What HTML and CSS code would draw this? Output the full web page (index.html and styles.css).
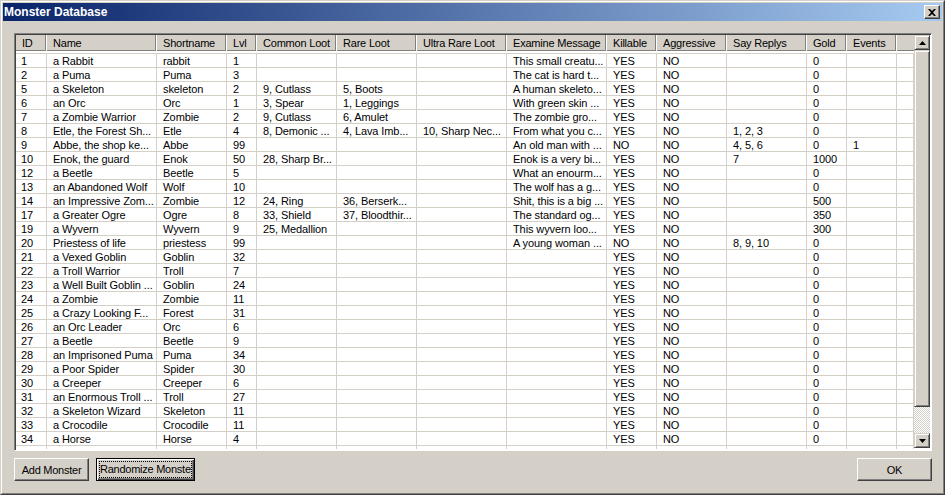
FILE: index.html
```html
<!DOCTYPE html>
<html lang="en">
<head>
<meta charset="utf-8">
<title>Monster Database</title>
<link rel="stylesheet" href="styles.css">
</head>
<body>
<div class="window">
<div class="window-inner">
  <div class="titlebar">
    <span class="title">Monster Database</span>
    <button class="close" type="button" aria-label="Close"><svg width="8" height="7" viewBox="0 0 8 7"><path d="M0 0h2l2 2 2-2h2L5 3.500 8 7H6L4 5 2 7H0l3-3.500z" fill="#000"/></svg></button>
  </div>
  <div class="content">
    <div class="listview">
      <div class="list-scroll">
        <table class="grid">
          <colgroup>
            <col class="c-id"><col class="c-name"><col class="c-short"><col class="c-lvl"><col class="c-loot"><col class="c-loot"><col class="c-ultra"><col class="c-exam"><col class="c-kill"><col class="c-aggr"><col class="c-say"><col class="c-gold"><col class="c-ev"><col class="c-fill">
          </colgroup>
          <thead>
            <tr><th><div>ID</div></th><th><div>Name</div></th><th><div>Shortname</div></th><th><div>Lvl</div></th><th><div>Common Loot</div></th><th><div>Rare Loot</div></th><th><div>Ultra Rare Loot</div></th><th><div>Examine Message</div></th><th><div>Killable</div></th><th><div>Aggressive</div></th><th><div>Say Replys</div></th><th><div>Gold</div></th><th><div>Events</div></th><th><div></div></th></tr>
          </thead>
          <tbody>
            <tr><td>1</td><td>a Rabbit</td><td>rabbit</td><td>1</td><td></td><td></td><td></td><td>This small creatu...</td><td>YES</td><td>NO</td><td></td><td>0</td><td></td><td></td></tr>
            <tr><td>2</td><td>a Puma</td><td>Puma</td><td>3</td><td></td><td></td><td></td><td>The cat is hard t...</td><td>YES</td><td>NO</td><td></td><td>0</td><td></td><td></td></tr>
            <tr><td>5</td><td>a Skeleton</td><td>skeleton</td><td>2</td><td>9, Cutlass</td><td>5, Boots</td><td></td><td>A human skeleto...</td><td>YES</td><td>NO</td><td></td><td>0</td><td></td><td></td></tr>
            <tr><td>6</td><td>an Orc</td><td>Orc</td><td>1</td><td>3, Spear</td><td>1, Leggings</td><td></td><td>With green skin ...</td><td>YES</td><td>NO</td><td></td><td>0</td><td></td><td></td></tr>
            <tr><td>7</td><td>a Zombie Warrior</td><td>Zombie</td><td>2</td><td>9, Cutlass</td><td>6, Amulet</td><td></td><td>The zombie gro...</td><td>YES</td><td>NO</td><td></td><td>0</td><td></td><td></td></tr>
            <tr><td>8</td><td>Etle, the Forest Sh...</td><td>Etle</td><td>4</td><td>8, Demonic ...</td><td>4, Lava Imb...</td><td>10, Sharp Nec...</td><td>From what you c...</td><td>YES</td><td>NO</td><td>1, 2, 3</td><td>0</td><td></td><td></td></tr>
            <tr><td>9</td><td>Abbe, the shop ke...</td><td>Abbe</td><td>99</td><td></td><td></td><td></td><td>An old man with ...</td><td>NO</td><td>NO</td><td>4, 5, 6</td><td>0</td><td>1</td><td></td></tr>
            <tr><td>10</td><td>Enok, the guard</td><td>Enok</td><td>50</td><td>28, Sharp Br...</td><td></td><td></td><td>Enok is a very bi...</td><td>YES</td><td>NO</td><td>7</td><td>1000</td><td></td><td></td></tr>
            <tr><td>12</td><td>a Beetle</td><td>Beetle</td><td>5</td><td></td><td></td><td></td><td>What an enourm...</td><td>YES</td><td>NO</td><td></td><td>0</td><td></td><td></td></tr>
            <tr><td>13</td><td>an Abandoned Wolf</td><td>Wolf</td><td>10</td><td></td><td></td><td></td><td>The wolf has a g...</td><td>YES</td><td>NO</td><td></td><td>0</td><td></td><td></td></tr>
            <tr><td>14</td><td>an Impressive Zom...</td><td>Zombie</td><td>12</td><td>24, Ring</td><td>36, Berserk...</td><td></td><td>Shit, this is a big ...</td><td>YES</td><td>NO</td><td></td><td>500</td><td></td><td></td></tr>
            <tr><td>17</td><td>a Greater Ogre</td><td>Ogre</td><td>8</td><td>33, Shield</td><td>37, Bloodthir...</td><td></td><td>The standard og...</td><td>YES</td><td>NO</td><td></td><td>350</td><td></td><td></td></tr>
            <tr><td>19</td><td>a Wyvern</td><td>Wyvern</td><td>9</td><td>25, Medallion</td><td></td><td></td><td>This wyvern loo...</td><td>YES</td><td>NO</td><td></td><td>300</td><td></td><td></td></tr>
            <tr><td>20</td><td>Priestess of life</td><td>priestess</td><td>99</td><td></td><td></td><td></td><td>A young woman ...</td><td>NO</td><td>NO</td><td>8, 9, 10</td><td>0</td><td></td><td></td></tr>
            <tr><td>21</td><td>a Vexed Goblin</td><td>Goblin</td><td>32</td><td></td><td></td><td></td><td></td><td>YES</td><td>NO</td><td></td><td>0</td><td></td><td></td></tr>
            <tr><td>22</td><td>a Troll Warrior</td><td>Troll</td><td>7</td><td></td><td></td><td></td><td></td><td>YES</td><td>NO</td><td></td><td>0</td><td></td><td></td></tr>
            <tr><td>23</td><td>a Well Built Goblin ...</td><td>Goblin</td><td>24</td><td></td><td></td><td></td><td></td><td>YES</td><td>NO</td><td></td><td>0</td><td></td><td></td></tr>
            <tr><td>24</td><td>a Zombie</td><td>Zombie</td><td>11</td><td></td><td></td><td></td><td></td><td>YES</td><td>NO</td><td></td><td>0</td><td></td><td></td></tr>
            <tr><td>25</td><td>a Crazy Looking F...</td><td>Forest</td><td>31</td><td></td><td></td><td></td><td></td><td>YES</td><td>NO</td><td></td><td>0</td><td></td><td></td></tr>
            <tr><td>26</td><td>an Orc Leader</td><td>Orc</td><td>6</td><td></td><td></td><td></td><td></td><td>YES</td><td>NO</td><td></td><td>0</td><td></td><td></td></tr>
            <tr><td>27</td><td>a Beetle</td><td>Beetle</td><td>9</td><td></td><td></td><td></td><td></td><td>YES</td><td>NO</td><td></td><td>0</td><td></td><td></td></tr>
            <tr><td>28</td><td>an Imprisoned Puma</td><td>Puma</td><td>34</td><td></td><td></td><td></td><td></td><td>YES</td><td>NO</td><td></td><td>0</td><td></td><td></td></tr>
            <tr><td>29</td><td>a Poor Spider</td><td>Spider</td><td>30</td><td></td><td></td><td></td><td></td><td>YES</td><td>NO</td><td></td><td>0</td><td></td><td></td></tr>
            <tr><td>30</td><td>a Creeper</td><td>Creeper</td><td>6</td><td></td><td></td><td></td><td></td><td>YES</td><td>NO</td><td></td><td>0</td><td></td><td></td></tr>
            <tr><td>31</td><td>an Enormous Troll ...</td><td>Troll</td><td>27</td><td></td><td></td><td></td><td></td><td>YES</td><td>NO</td><td></td><td>0</td><td></td><td></td></tr>
            <tr><td>32</td><td>a Skeleton Wizard</td><td>Skeleton</td><td>11</td><td></td><td></td><td></td><td></td><td>YES</td><td>NO</td><td></td><td>0</td><td></td><td></td></tr>
            <tr><td>33</td><td>a Crocodile</td><td>Crocodile</td><td>11</td><td></td><td></td><td></td><td></td><td>YES</td><td>NO</td><td></td><td>0</td><td></td><td></td></tr>
            <tr><td>34</td><td>a Horse</td><td>Horse</td><td>4</td><td></td><td></td><td></td><td></td><td>YES</td><td>NO</td><td></td><td>0</td><td></td><td></td></tr>
            <tr><td>37</td><td>a Lich</td><td>Lich</td><td>5</td><td></td><td></td><td></td><td></td><td>YES</td><td>NO</td><td></td><td>0</td><td></td><td></td></tr>
          </tbody>
        </table>
      </div>
      <div class="scrollbar">
        <div class="sb-btn"><svg width="7" height="4" viewBox="0 0 7 4"><path d="M3.500 0L7 4H0z" fill="#000"/></svg></div>
        <div class="sb-thumb"></div>
        <div class="sb-track"></div>
        <div class="sb-btn"><svg width="7" height="4" viewBox="0 0 7 4"><path d="M0 0h7L3.500 4z" fill="#000"/></svg></div>
      </div>
    </div>
    <div class="actions">
      <button class="btn btn-add" type="button">Add Monster</button>
      <button class="btn btn-focus" type="button"><span>Randomize Monster</span></button>
      <button class="btn btn-ok" type="button">OK</button>
    </div>
  </div>
</div>
</div>
</body>
</html>
```
FILE: styles.css
```css
* { box-sizing: border-box; }
html, body { margin: 0; padding: 0; }
body {
  width: 945px;
  height: 495px;
  overflow: hidden;
  background: #d4d0c8;
  font-family: "Liberation Sans", Arial, sans-serif;
  font-size: 11px;
  color: #000;
}
.window {
  width: 945px;
  height: 495px;
  border: 1px solid;
  border-color: #d4d0c8 #404040 #404040 #d4d0c8;
}
.window-inner {
  height: 100%;
  border: 1px solid;
  border-color: #fff #808080 #808080 #fff;
  padding: 1px;
  display: flex;
  flex-direction: column;
}
.titlebar {
  height: 18px;
  flex: none;
  display: flex;
  align-items: center;
  justify-content: space-between;
  padding: 0 2px 0 1px;
  background: linear-gradient(to right, #0a246a, #a6caf0);
}
.title {
  color: #fff;
  font-weight: 700;
  font-size: 12px;
}
.close {
  width: 16px;
  height: 14px;
  padding: 0;
  display: flex;
  align-items: center;
  justify-content: center;
  background: #d4d0c8;
  border: 1px solid;
  border-color: #fff #404040 #404040 #fff;
  box-shadow: inset -1px -1px 0 #808080;
}
.content {
  flex: 1;
  min-height: 0;
  display: flex;
  flex-direction: column;
  padding: 12px 10px 10px 11px;
}
.listview {
  width: 918px;
  height: 418px;
  flex: none;
  display: flex;
  background: #fff;
  border: 1px solid;
  border-color: #808080 #fff #fff #808080;
  box-shadow: inset 1px 1px 0 #404040;
  padding: 1px;
}
.list-scroll {
  flex: 1;
  min-width: 0;
  overflow: hidden;
}
.grid {
  width: 898px;
  table-layout: fixed;
  border-collapse: separate;
  border-spacing: 0;
}
.c-id { width: 31px; }
.c-name { width: 110px; }
.c-short { width: 70px; }
.c-lvl { width: 30px; }
.c-loot { width: 80px; }
.c-ultra { width: 90px; }
.c-exam { width: 100px; }
.c-kill { width: 50px; }
.c-aggr { width: 70px; }
.c-say { width: 80px; }
.c-gold { width: 40px; }
.c-ev { width: 50px; }
.c-fill { width: 17px; }
th {
  height: 19px;
  padding: 0 1px 2px 0;
  font-weight: 400;
  text-align: left;
  background: #fff;
  border-bottom: 1px solid #d4d0c8;
  vertical-align: top;
}
th:last-child { padding-right: 0; }
th div {
  height: 16px;
  line-height: 16px;
  padding-left: 6px;
  white-space: nowrap;
  overflow: hidden;
  letter-spacing: -0.2px;
  background: #d4d0c8;
  border-right: 1px solid #808080;
  border-bottom: 1px solid #808080;
}
th:last-child div { border-right: 0; }
td {
  height: 14px;
  padding: 1px 0 0 6px;
  line-height: 12px;
  letter-spacing: -0.1px;
  white-space: nowrap;
  overflow: hidden;
  border-right: 1px solid #d4d0c8;
  border-bottom: 1px solid #d4d0c8;
}
td:first-child { padding-left: 5px; }
.scrollbar {
  width: 16px;
  flex: none;
  display: flex;
  flex-direction: column;
  margin-bottom: 1px;
}
.sb-btn {
  height: 15px;
  flex: none;
  display: flex;
  align-items: center;
  justify-content: center;
  background: #d4d0c8;
  border: 1px solid;
  border-color: #d4d0c8 #404040 #404040 #d4d0c8;
  box-shadow: inset 1px 1px 0 #fff, inset -1px -1px 0 #808080;
}
.sb-thumb {
  height: 357px;
  flex: none;
  background: #d4d0c8;
  border: 1px solid;
  border-color: #d4d0c8 #404040 #404040 #d4d0c8;
  box-shadow: inset 1px 1px 0 #fff, inset -1px -1px 0 #808080;
}
.sb-track {
  flex: 1;
  background: repeating-conic-gradient(#d4d0c8 0 25%, #fff 0 50%) 0 0 / 2px 2px;
}
.actions {
  display: flex;
  margin-top: 7px;
  height: 23px;
  flex: none;
  gap: 7px;
}
.btn {
  height: 23px;
  padding: 0;
  font: inherit;
  letter-spacing: -0.25px;
  color: #000;
  background: #d4d0c8;
  border: 1px solid;
  border-color: #fff #404040 #404040 #fff;
  box-shadow: inset -1px -1px 0 #808080;
}
.btn-add { width: 75px; }
.btn-focus {
  width: 99px;
  border: 1px solid #000;
  box-shadow: inset 1px 1px 0 #fff, inset -1px -1px 0 #404040, inset -2px -2px 0 #808080;
  padding: 3px;
  display: flex;
}
.btn-focus span {
  flex: 1;
  min-width: 0;
  display: block;
  overflow: hidden;
  white-space: nowrap;
  text-align: left;
  line-height: 13px;
  padding-top: 1px;
  outline: 1px dotted #000;
}
.btn-ok { width: 75px; margin-left: auto; }
```
